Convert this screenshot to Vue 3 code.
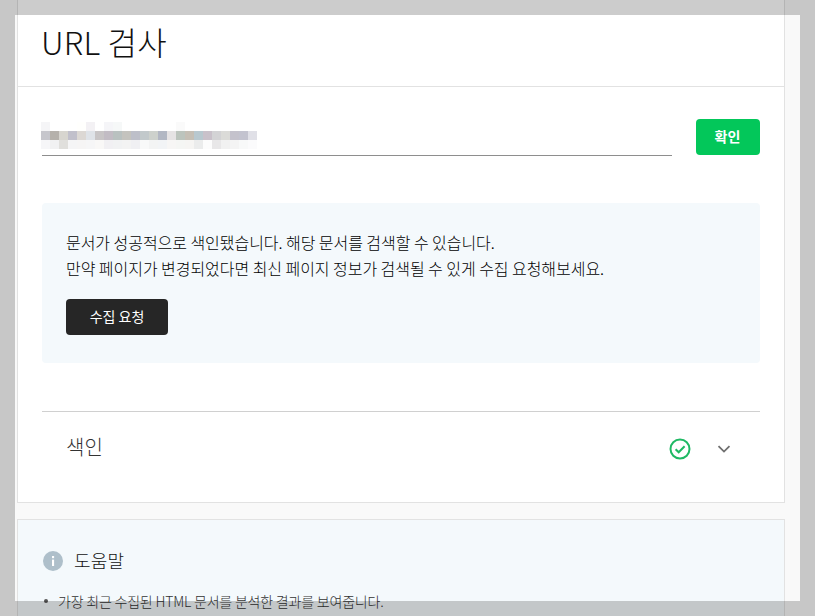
<script setup>
const row1 = ['#f5f5f7','#fff','#fff','#fff','#fffffd','#f3f1f4','#fff','#f5f5f8','#f6f8f8','#fff','#fff','#fff','#fff','#fff','#fff','#fafafa','#fff','#fff','#fff','#fff','#fff','#fff','#fff','#fff']
const row2 = ['#c6c6cc','#b5b1ab','#d7d5cf','#c1c0cb','#dcd8d4','#dfe3e8','#c8c5c6','#c2bcc4','#b9c1c0','#c4c3be','#bdbfc9','#c2c9cb','#cdd1cc','#b2b7c3','#e6e3e4','#bcc4bd','#c5bfb5','#b8c8cf','#c9c1ca','#d3d3d5','#dbdbd8','#c4c2cc','#c3c3cf','#e0e0e7']
const row3 = ['#f6f6f8','#f1f1f2','#e0dfdc','#f5f5f6','#f6f5f5','#f6f6f7','#f9f8f7','#f1f0f3','#f1f2f3','#f3f3f3','#f0f0f3','#f8f9f9','#f3f4f4','#f2f4f6','#f7f6f5','#f5f6f4','#f6f5f3','#ebecec','#fcfcfc','#e8e7e8','#f1f1f1','#f4f4f4','#f8f9f9','#fbfbfc']
const cells = [...row1, ...row2, ...row3]
</script>

<template>
  <div class="page">
    <section class="card">
      <header class="card-head">
        <h1 class="title">URL 검사</h1>
      </header>
      <div class="card-body">
        <div class="url-row">
          <div class="url-input">
            <div class="blur-grid">
              <span v-for="(c, i) in cells" :key="i" class="blur-cell" :style="{ background: c }"></span>
            </div>
          </div>
          <button class="confirm">확인</button>
        </div>
        <div class="notice">
          <p class="notice-text">문서가 성공적으로 색인됐습니다. 해당 문서를 검색할 수 있습니다.</p>
          <p class="notice-text">만약 페이지가 변경되었다면 최신 페이지 정보가 검색될 수 있게 수집 요청해보세요.</p>
          <button class="request">수집 요청</button>
        </div>
        <div class="index-row">
          <span class="index-label">색인</span>
          <svg class="check" width="22" height="22" viewBox="0 0 22 22" fill="none">
            <circle cx="11" cy="11" r="9.5" stroke="#1fb964" stroke-width="2" />
            <path d="M6.6 11.2l3.1 3.1 5.9-6" stroke="#1fb964" stroke-width="2" />
          </svg>
          <svg class="chevron" width="14" height="10" viewBox="0 0 14 10" fill="none">
            <path d="M1.5 2.2L7 7.6l5.5-5.4" stroke="#6f6f6f" stroke-width="1.8" />
          </svg>
        </div>
      </div>
    </section>
    <section class="help">
      <div class="help-head">
        <svg width="20" height="20" viewBox="0 0 20 20">
          <circle cx="10" cy="10" r="10" fill="#aebfca" />
          <rect x="9" y="8.6" width="2.1" height="6.4" fill="#fff" />
          <rect x="9" y="5" width="2.1" height="2.2" fill="#fff" />
        </svg>
        <h2 class="help-title">도움말</h2>
      </div>
      <ul class="help-list">
        <li class="help-item">가장 최근 수집된 HTML 문서를 분석한 결과를 보여줍니다.</li>
      </ul>
    </section>
    <div class="frame"></div>
  </div>
</template>

<style>
html, body { margin: 0; background: #f9f9f9; }
</style>

<style scoped>
.page {
  position: relative;
  width: 815px;
  height: 616px;
  overflow: hidden;
  box-sizing: border-box;
  padding-left: 17px;
  background: #f9f9f9;
  font-family: "Noto Sans CJK KR", "Noto Sans", sans-serif;
  color: #222;
}
.card {
  width: 768px;
  box-sizing: border-box;
  height: 503px;
  background: #fff;
  border: 1px solid #e2e2e2;
  border-top: 0;
}
.card-head {
  height: 86px;
  border-bottom: 1px solid #e2e2e2;
  padding-left: 23px;
}
.title {
  margin: 0;
  padding-top: 18px;
  font-size: 32px;
  line-height: 46px;
  font-weight: 300;
  letter-spacing: 0.2px;
  color: #111;
}
.card-body {
  padding: 32px 24px 0;
}
.url-row {
  display: flex;
  justify-content: space-between;
  align-items: flex-start;
}
.url-input {
  width: 630px;
  height: 36px;
  border-bottom: 1px solid #8e8e8e;
  box-sizing: content-box;
}
.blur-grid {
  display: grid;
  grid-template-columns: repeat(24, 9px);
  grid-auto-rows: 9px;
  margin: 3px 0 0 -1px;
}
.confirm {
  width: 64px;
  height: 36px;
  border: 0;
  border-radius: 4px;
  background: #03c75a;
  color: #fff;
  font: 700 14px "Noto Sans CJK KR", sans-serif;
  padding: 0 1px 3px 0;
}
.notice {
  margin-top: 47px;
  height: 160px;
  box-sizing: border-box;
  padding: 26px 24px 0;
  border-radius: 4px;
  background: #f4f9fc;
}
.notice-text {
  margin: 0;
  font-size: 16px;
  letter-spacing: -0.04px;
  line-height: 26px;
  font-weight: 300;
  color: #000;
}
.request {
  display: block;
  margin-top: 18px;
  width: 102px;
  height: 36px;
  border: 0;
  border-radius: 4px;
  background: #262626;
  color: #fff;
  font: 400 14px "Noto Sans CJK KR", sans-serif;
  padding: 0 0 2px;
}
.index-row {
  margin-top: 48px;
  height: 74px;
  box-sizing: border-box;
  border-top: 1px solid #d0d0d0;
  display: flex;
  align-items: center;
  padding: 0 29px 0 24px;
}
.index-label {
  flex: 1;
  font-size: 20px;
  font-weight: 300;
  line-height: 28px;
  color: #333;
  padding-bottom: 3px;
}
.check {
  margin-right: 0;
}
.chevron {
  margin-left: 26px;
}
.help {
  margin-top: 16px;
  width: 768px;
  height: 140px;
  box-sizing: border-box;
  background: #f4f9fc;
  border: 1px solid #e2e2e2;
  padding: 29px 25px 0;
}
.help-head {
  display: flex;
  align-items: center;
  gap: 11px;
  height: 24px;
}
.help-title {
  margin: 0;
  font-size: 18px;
  font-weight: 300;
  color: #111;
  letter-spacing: 0.2px;
  padding-bottom: 2px;
}
.help-list {
  margin: 16px 0 0;
  padding: 0;
  list-style: none;
  font-size: 14px;
  line-height: 24px;
  font-weight: 300;
  color: #333;
}
.help-item {
  display: flex;
  align-items: center;
  gap: 10px;
  letter-spacing: -0.2px;
}
.help-item::before {
  content: "";
  width: 4px;
  height: 4px;
  margin-left: 1px;
  border-radius: 50%;
  background: #555;
}
.frame {
  position: absolute;
  inset: 0;
  border: 15px solid rgba(0, 0, 0, 0.2);
  pointer-events: none;
}
</style>
